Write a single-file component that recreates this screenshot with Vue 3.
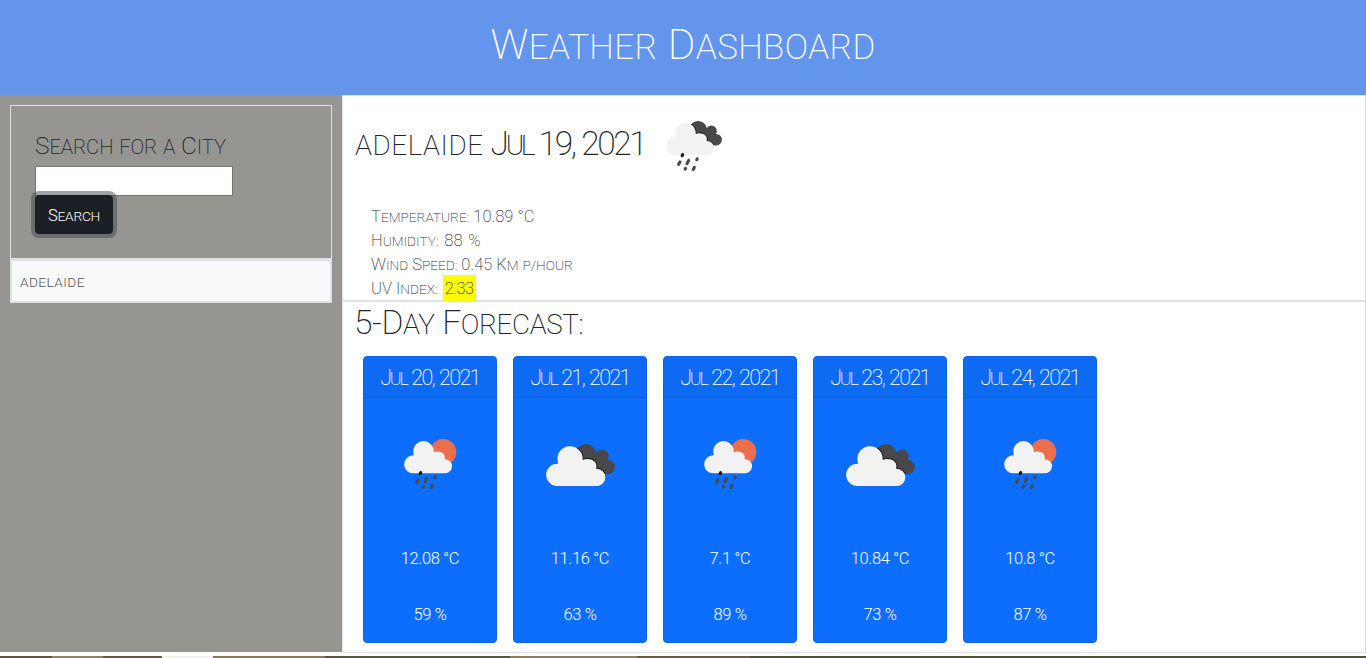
<script setup>
import { h } from 'vue'

// Small capitals: each capitalised word is one box with an enlarged first letter.
const Caps = (props) => {
  const parts = props.text.split(/(\s|-)/)
  return h('span', { class: 'caps' }, parts.map((part) => {
    if (/^J/.test(part)) return h('span', { class: 'word initial narrow' }, part)
    if (/^[A-Z][a-z]/.test(part)) return h('span', { class: 'word initial' }, part)
    if (/^[a-z]/.test(part)) return h('span', { class: 'word' }, part)
    if (/^\d\d/.test(part)) return h('span', { class: 'num' }, part)
    return part
  }))
}
Caps.props = ['text']

const days = [
  { date: 'Jul 20, 2021', icon: 'sun', temp: '12.08 °C', hum: '59 %' },
  { date: 'Jul 21, 2021', icon: 'cloud', temp: '11.16 °C', hum: '63 %' },
  { date: 'Jul 22, 2021', icon: 'sun', temp: '7.1 °C', hum: '89 %' },
  { date: 'Jul 23, 2021', icon: 'cloud', temp: '10.84 °C', hum: '73 %' },
  { date: 'Jul 24, 2021', icon: 'sun', temp: '10.8 °C', hum: '87 %' },
]
</script>

<template>
  <div class="page">
    <svg class="defs" width="0" height="0">
      <defs>
        <path id="front" d="M52 168A33.500 33.500 0 0 1 52 101L55 101A38 38 0 1 1 128 90Q137 86 147 88A21 21 0 0 1 168 116L170 116A26 26 0 0 1 170 168Z" />
        <path id="back" d="M104 72A33 33 0 0 1 169 68A19 19 0 0 1 203 90A21.500 21.500 0 0 1 204 133L170 130L110 90Z" />
        <clipPath id="backclip"><use href="#back" /></clipPath>
        <g id="clouds">
          <use href="#back" fill="#48484a" />
          <g clip-path="url(#backclip)"><use href="#front" fill="none" stroke="#1f1f20" stroke-width="6" /></g>
          <use href="#front" fill="#f2f2f0" />
        </g>
        <g id="rain" stroke="#48484a" stroke-width="9.500" stroke-linecap="round">
          <path d="M122 176L120.500 179" stroke="#18181a" />
          <path d="M114 198L110 205M140 193L135 203M165.500 189L164.500 191M130.500 217L129.500 219M157 214L154 220" />
        </g>
      </defs>
    </svg>

    <header class="top"><h1><Caps text="Weather Dashboard" /></h1></header>

    <div class="body">
      <aside class="side">
        <form class="search" @submit.prevent>
          <h4><Caps text="Search for a City" /></h4>
          <input type="text" aria-label="City">
          <button type="submit"><Caps text="Search" /></button>
        </form>
        <div class="history"><Caps text="adelaide" /></div>
      </aside>

      <main class="main">
        <section class="today">
          <div class="headline">
            <h2><Caps text="adelaide Jul 19, 2021" /></h2>
            <svg class="icon" viewBox="0 0 300 300">
              <use href="#clouds" transform="translate(57.420 40.920) scale(.81)" />
              <use href="#rain" />
            </svg>
          </div>
          <ul class="facts">
            <li><Caps text="Temperature: 10.89 °C" /></li>
            <li class="loose"><Caps text="Humidity: 88 %" /></li>
            <li><Caps text="Wind Speed: 0.45 Km p/hour" /></li>
            <li><Caps text="UV Index:" /><mark>2.33</mark></li>
          </ul>
        </section>
        <section class="forecast">
          <h2><Caps text="5-Day Forecast:" /></h2>
          <div class="cards">
            <article v-for="d in days" :key="d.date" class="card">
              <h5><Caps :text="d.date" /></h5>
              <svg class="icon" viewBox="0 0 300 300">
                <template v-if="d.icon === 'sun'">
                  <circle cx="190" cy="114" r="39" fill="#ec6e4c" />
                  <use href="#front" transform="translate(57.420 41.920) scale(.81)" fill="#f2f2f2" />
                  <use href="#rain" />
                </template>
                <use v-else href="#clouds" transform="translate(30 48)" />
              </svg>
              <p>{{ d.temp }}</p>
              <p>{{ d.hum }}</p>
            </article>
          </div>
        </section>
      </main>
    </div>
    <div class="photo"></div>
  </div>
</template>

<style>
body { margin: 0; overflow: hidden; }
.caps { white-space: pre; }
.caps .word { display: inline-block; line-height: 1; font-size: .83em; text-transform: uppercase; }
.caps .initial::first-letter { font-size: 1.205em; }
h2 .num, h5 .num { letter-spacing: -.075em; }
h2 .narrow, h5 .narrow { letter-spacing: -.12em; }
.headline .word:not(.narrow) { letter-spacing: .6px; }
</style>

<style scoped>
.page { width: 1366px; height: 658px; overflow: hidden; background: #fff; display: flex; flex-direction: column; font-family: Roboto, "Liberation Sans", sans-serif; font-weight: 200; font-size: 16.5px; color: #212529; }
.page * { box-sizing: border-box; }
.defs { display: block; flex: none; }
h1, h2, h4, h5, p, ul { margin: 0; padding: 0; font-weight: 200; }
.top { height: 95px; flex: none; background: #6495ed; color: #fff; text-align: center; }
h1 { font-size: 42px; line-height: 89px; letter-spacing: .35px; }
.body { height: 558px; flex: none; display: flex; }
.side { width: 342px; height: 557px; flex: none; background: #979592; padding: 10px; }
.search { height: 154px; border: 1px solid #dee2e6; padding: 24px; display: flex; flex-direction: column; align-items: flex-start; }
h4 { font-size: 24.500px; line-height: 32px; height: 36px; white-space: nowrap; letter-spacing: -.12px; }
input { width: 198px; height: 30px; flex: none; border: 1px solid #767676; border-radius: 0; background: #fff; padding: 0; }
button { width: 78px; height: 39px; flex: none; margin-top: -1px; border: 1px solid #1a1e21; border-radius: 4px; background: #1c1f23; color: #fff; padding: 2px 0 0; box-shadow: 0 0 0 4px rgba(66, 70, 73, .5); font: 300 16.500px Roboto, sans-serif; letter-spacing: -.2px; }
.history { height: 44px; border: 2px solid #dee2e6; background: #f8f9fa; padding-left: 8px; line-height: 41px; color: #555; font-weight: 300; font-size: 16.500px; letter-spacing: .4px; }
.main { width: 1024px; flex: none; display: flex; flex-direction: column; }
.today { height: 206px; flex: none; border: 1px solid #dee2e6; padding-left: 12px; }
.headline { display: flex; height: 100px; align-items: center; }
.headline h2 { width: 287px; white-space: nowrap; line-height: 96px; height: 100px; word-spacing: -1.2px; }
h2 { font-size: 33.500px; }
.icon { width: 100px; height: 100px; display: block; flex: none; }
.facts { list-style: none; padding: 9px 0 0 16px; color: #34383c; line-height: 24px; }
.facts li { height: 24px; white-space: nowrap; }
.facts .loose { word-spacing: 1.800px; }
mark { display: inline-block; width: 33px; height: 26px; margin: -2px 0 0 5px; background: #ff0; color: #34383c; text-align: center; vertical-align: top; line-height: 28px; letter-spacing: -.5px; }
.forecast { height: 352px; flex: none; border: 1px solid #dee2e6; padding-left: 12px; }
.forecast h2 { line-height: 42px; height: 54px; white-space: nowrap; letter-spacing: -.4px; margin-left: -1px; }
.cards { display: flex; gap: 16px; padding-left: 8px; }
.card { width: 134px; height: 287px; background: #0d6efd; border: 1px solid #0c63e4; border-radius: 4px; color: #fff; text-align: center; }
h5 { height: 41px; line-height: 41px; font-size: 21.500px; background: #0d6af3; border-bottom: 1px solid #0b5ed7; border-radius: 3px 3px 0 0; white-space: nowrap; word-spacing: -.5px; }
.card .icon { margin: 16px auto 33px; }
.card p { height: 24px; line-height: 24px; margin-bottom: 32px; font-weight: 300; letter-spacing: -.4px; }
.photo { height: 2px; margin-top: 3px; flex: none; background: linear-gradient(90deg, #5f563f 0 52px, #8d8468 52px 103px, #665a43 103px 162px, #f4f2ea 162px 213px, #8b7857 213px 325px, #575640 325px 510px, #8b8062 510px 637px, #665d42 637px 750px, #4e5638 750px 1366px); }
</style>
